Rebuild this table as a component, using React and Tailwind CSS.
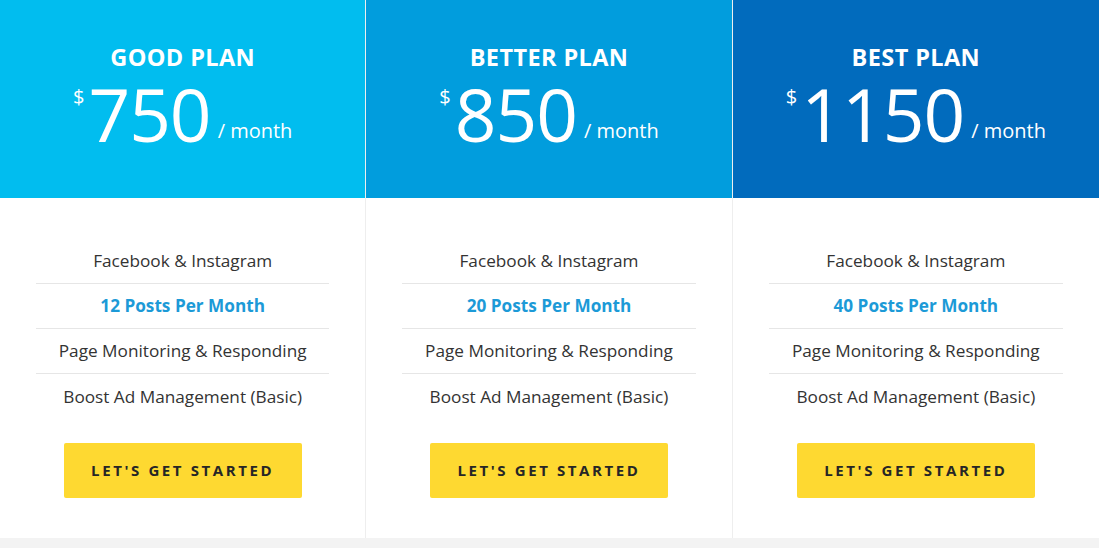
import React from 'react';

const plans = [
  { name: 'GOOD PLAN', price: '750', posts: '12 Posts Per Month', bg: 'bg-[#01bdef]' },
  { name: 'BETTER PLAN', price: '850', posts: '20 Posts Per Month', bg: 'bg-[#019ddd]' },
  { name: 'BEST PLAN', price: '1150', posts: '40 Posts Per Month', bg: 'bg-[#016bbd]' },
];

const PlanCard = ({ plan, last }) => (
  <div className={`flex flex-col bg-white ${last ? '' : 'border-r border-[#eeeeee]'}`}>
    {/* Header */}
    <div className={`${plan.bg} h-[198px] flex flex-col items-center text-white`}>
      <h2 className="mt-[42px] text-[23.5px] font-bold leading-[30px] tracking-[0.4px]">{plan.name}</h2>
      <div className="flex items-start mt-[4px]">
        <span className="text-[20px] leading-none mt-[11px] mr-[4px]">$</span>
        <span className="text-[73px] leading-[76px] font-normal tracking-[-1px]">{plan.price}</span>
        <span className="text-[20px] leading-none mt-[45px] ml-[7px]">/ month</span>
      </div>
    </div>

    {/* Features */}
    <div className="px-9 pt-[41px] text-[17.2px] text-[#333333] text-center">
      <div className="h-[45px] flex items-center justify-center border-b border-[#e6e6e6]">Facebook &amp; Instagram</div>
      <div className="h-[45px] flex items-center justify-center border-b border-[#e6e6e6] font-bold text-[#1c9ad7]">{plan.posts}</div>
      <div className="h-[45px] flex items-center justify-center border-b border-[#e6e6e6]">Page Monitoring &amp; Responding</div>
      <div className="h-[45px] flex items-center justify-center">Boost Ad Management (Basic)</div>
    </div>

    <div className="flex justify-center pt-[24px] pb-[40px]">
      <button className="w-[238px] h-[55px] bg-[#fed931] rounded-[2px] text-[15px] font-bold tracking-[2.6px] text-[#262626]">
        LET&apos;S GET STARTED
      </button>
    </div>
  </div>
);

export default function App() {
  return (
    <div className="w-[1099px] h-[548px] bg-[#f3f3f3] font-['Open_Sans',sans-serif]">
      <div className="grid grid-cols-3">
        {plans.map((p, i) => (
          <PlanCard key={p.name} plan={p} last={i === plans.length - 1} />
        ))}
      </div>
    </div>
  );
}
